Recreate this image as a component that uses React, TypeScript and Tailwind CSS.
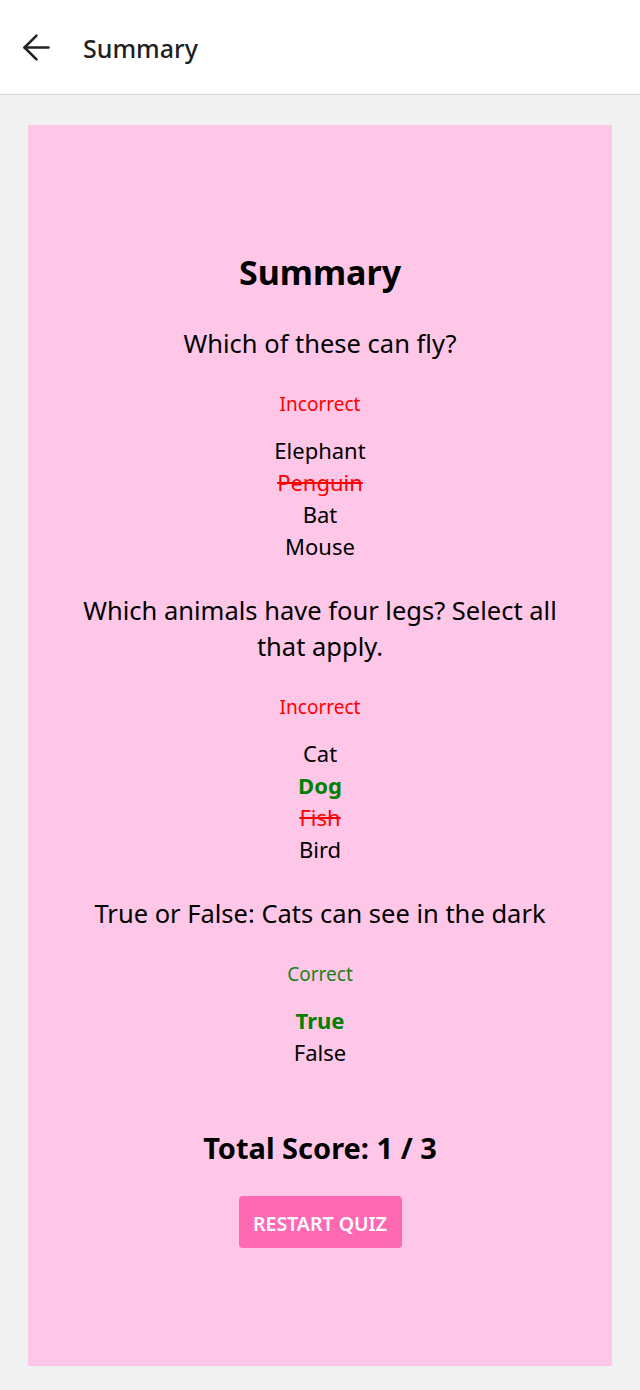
import { ArrowLeft } from "lucide-react";

type Option = { label: string; state?: "correct" | "wrong" };

const questions: { text: string; result: "Correct" | "Incorrect"; options: Option[] }[] = [
  {
    text: "Which of these can fly?",
    result: "Incorrect",
    options: [{ label: "Elephant" }, { label: "Penguin", state: "wrong" }, { label: "Bat" }, { label: "Mouse" }],
  },
  {
    text: "Which animals have four legs? Select all that apply.",
    result: "Incorrect",
    options: [{ label: "Cat" }, { label: "Dog", state: "correct" }, { label: "Fish", state: "wrong" }, { label: "Bird" }],
  },
  {
    text: "True or False: Cats can see in the dark",
    result: "Correct",
    options: [{ label: "True", state: "correct" }, { label: "False" }],
  },
];

export default function App() {
  return (
    <div className="min-h-[1390px] bg-[#f1f1f1] font-['Noto_Sans',sans-serif]">
      {/* Top bar */}
      <header className="h-[95px] bg-white border-b border-[#d6d6d6] flex items-center pl-[16px]">
        <ArrowLeft className="w-[41px] h-[41px] text-[#222]" strokeWidth={1.5} />
        <h1 className="ml-[26px] mt-[3px] text-[25px] font-medium text-[#1f1f1f]">Summary</h1>
      </header>

      <main className="px-[28px] pt-[30px] pb-6">
        <div className="bg-[#fec7e7] pt-[127px] pb-[118px] px-10 text-center text-black">
          <h2 className="text-[34px] leading-[40px] font-bold">Summary</h2>

          {questions.map((q, i) => (
            <section key={q.text} className={i === 0 ? "mt-[33px]" : "mt-[30px]"}>
              <p className="text-[25.5px] leading-[36px]">{q.text}</p>
              <p
                className={
                  "mt-[30px] text-[19px] leading-[27px] " +
                  (q.result === "Correct" ? "text-[#1a7f1a]" : "text-[#ff0000]")
                }
              >
                {q.result}
              </p>
              <ul className="mt-4">
                {q.options.map((o) => (
                  <li
                    key={o.label}
                    className={
                      "text-[22px] leading-[32px] " +
                      (o.state === "correct"
                        ? "text-[#008000] font-bold"
                        : o.state === "wrong"
                        ? "text-[#ff0000] line-through"
                        : "")
                    }
                  >
                    {o.label}
                  </li>
                ))}
              </ul>
            </section>
          ))}

          <p className="mt-[62px] text-[29px] leading-[36px] font-bold">Total Score: 1 / 3</p>
          <button className="mt-[30px] h-[52px] w-[163px] pt-[3px] rounded bg-[#ff69b4] text-white text-[19.5px] font-semibold uppercase">
            Restart Quiz
          </button>
        </div>
      </main>
    </div>
  );
}
